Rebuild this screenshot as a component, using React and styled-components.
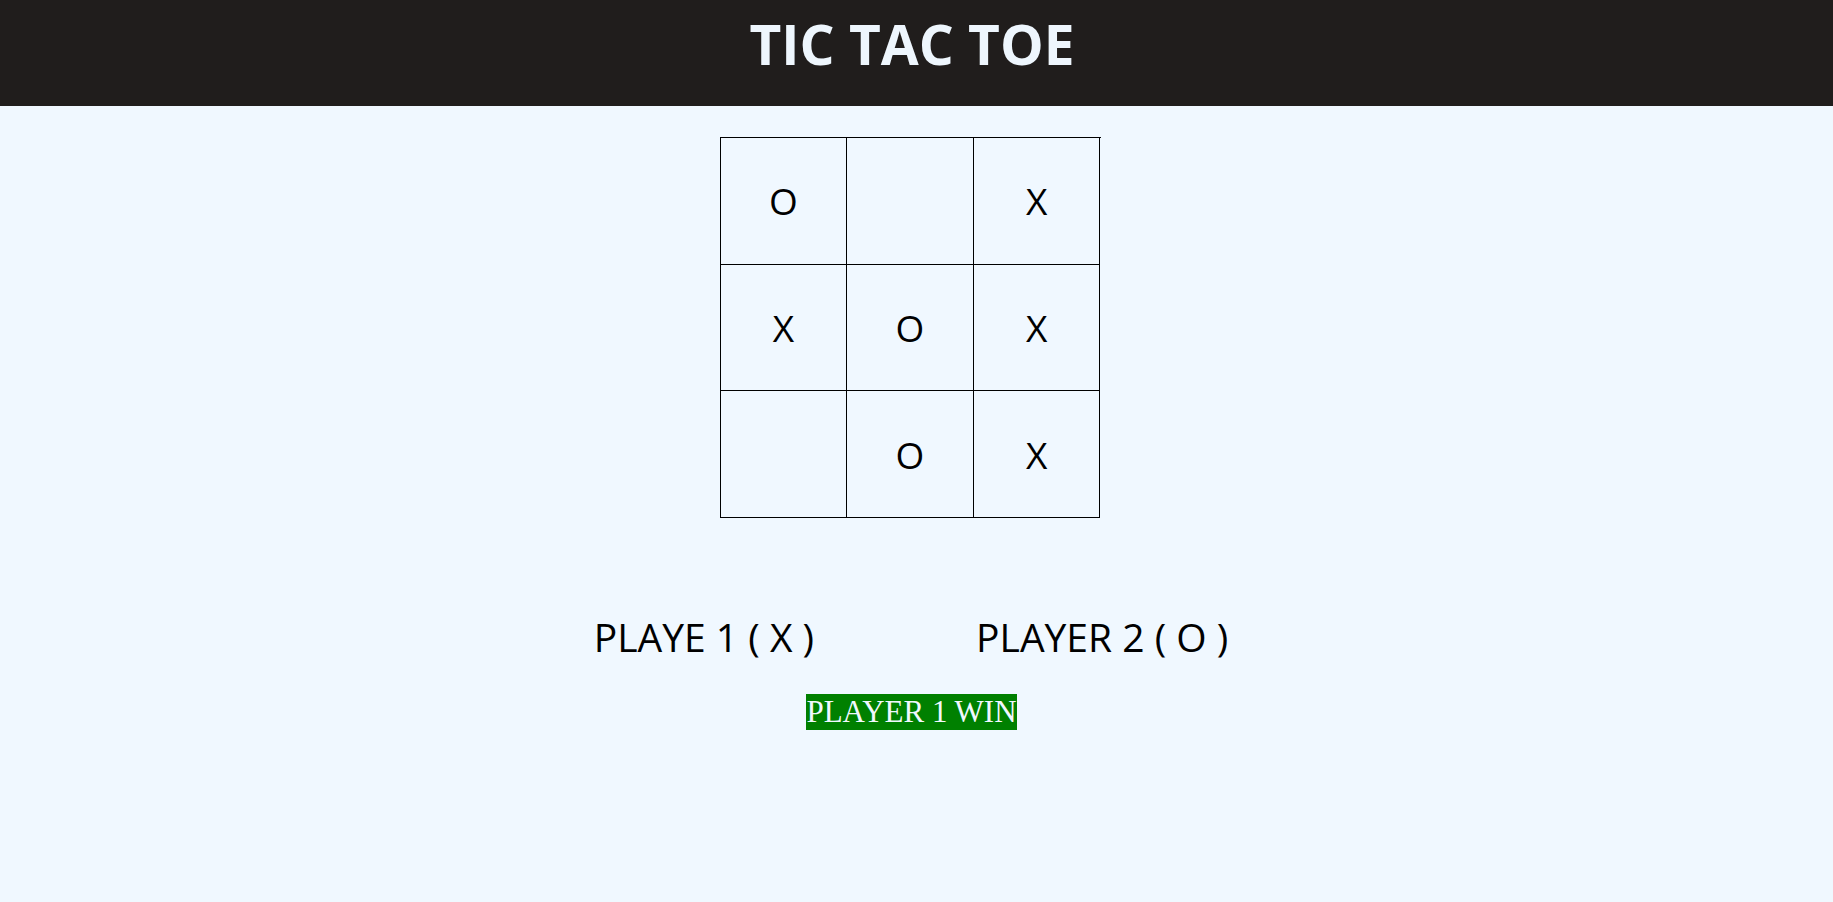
import React from "react";
import styled, { createGlobalStyle } from "styled-components";

const GlobalStyle = createGlobalStyle`
  html, body {
    margin: 0;
    padding: 0;
    background: #f0f8ff;
  }
  body {
    font-family: "Open Sans", "Noto Sans", sans-serif;
    min-height: 902px;
  }
`;

const Header = styled.header`
  box-sizing: border-box;
  height: 106px;
  background: #201d1c;
  display: flex;
  justify-content: center;
  padding: 7px 9px 0 0;
`;

const Title = styled.h1`
  margin: 0;
  font-family: "Open Sans", sans-serif;
  font-weight: 700;
  font-size: 55px;
  line-height: 1.362;
  color: #eef6fd;
`;

const Main = styled.main`
  display: flex;
  flex-direction: column;
  align-items: center;
  padding: 31px 13px 0 0;
`;

const Board = styled.div`
  box-sizing: border-box;
  width: 381px;
  height: 381px;
  display: grid;
  grid-template-columns: repeat(3, 1fr);
  grid-template-rows: repeat(3, 1fr);
  border-left: 1px solid #000;
  border-top: 1px solid #000;
`;

const Cell = styled.button`
  all: unset;
  box-sizing: border-box;
  border-right: 1px solid #000;
  border-bottom: 1px solid #000;
  display: flex;
  align-items: center;
  justify-content: center;
  font-family: "Open Sans", sans-serif;
  font-size: 37px;
  color: #000;
  cursor: pointer;
`;

const Players = styled.div`
  display: flex;
  gap: 162px;
  margin-top: 92px;
  margin-left: 2px;
`;

const Player = styled.div`
  font-family: "Open Sans", sans-serif;
  font-size: 39px;
  line-height: 1.362;
  color: #000;
  white-space: pre;
`;

const Winner = styled.div`
  margin-top: 31px;
  margin-left: 3px;
  background: #008000;
  color: #f0f8ff;
  font-family: "Liberation Serif", "Times New Roman", serif;
  font-size: 31px;
  line-height: 1.149;
`;

const board = ["O", "", "X", "X", "O", "X", "", "O", "X"];

export default function App() {
  return (
    <>
      <GlobalStyle />
      <Header>
        <Title>TIC TAC TOE</Title>
      </Header>
      <Main>
        <Board>
          {board.map((v, i) => (
            <Cell key={i}>{v}</Cell>
          ))}
        </Board>
        <Players>
          <Player>PLAYE 1 ( X )</Player>
          <Player>PLAYER 2 ( O )</Player>
        </Players>
        <Winner>PLAYER 1 WIN</Winner>
      </Main>
    </>
  );
}
